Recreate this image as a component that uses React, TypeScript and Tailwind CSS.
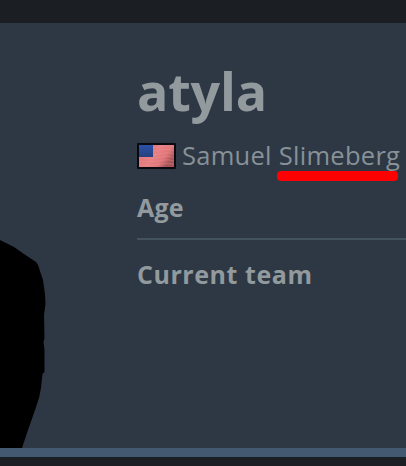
const FONT = "font-['Open_Sans','Noto_Sans',sans-serif]";

function UsFlag() {
  return (
    <svg width="39" height="26" viewBox="0 0 39 26" className="mt-px shrink-0" role="img" aria-label="United States">
      <defs>
        <linearGradient id="sheen" x1="0" y1="0" x2="1" y2="0.5">
          <stop offset="0" stopColor="#df6b70" />
          <stop offset="0.55" stopColor="#e88083" />
          <stop offset="0.8" stopColor="#df7679" />
          <stop offset="1" stopColor="#a95459" />
        </linearGradient>
        <linearGradient id="canton" x1="0" y1="0" x2="0" y2="1">
          <stop offset="0" stopColor="#2a52a8" />
          <stop offset="1" stopColor="#263f7e" />
        </linearGradient>
      </defs>
      <rect width="39" height="26" rx="1" fill="#080a10" />
      <rect x="2" y="2" width="35" height="22" fill="url(#sheen)" />
      {[4, 7.5, 11, 14.5, 18, 21.5].map((y) => (
        <path
          key={y}
          d={`M2 ${y} C10 ${y + 1.5} 18 ${y + 1} 25 ${y - 0.5} S33 ${y - 1} 37 ${y}`}
          fill="none"
          stroke="#f0a0a1"
          strokeWidth="1.2"
          opacity="0.25"
        />
      ))}
      <rect x="2" y="2" width="14" height="12" fill="url(#canton)" />
    </svg>
  );
}

function PlayerSilhouette() {
  return (
    <svg width="48" height="208" viewBox="0 0 48 208" className="block self-end">
      <path
        d="M0 0 L14 7 L24 14 L36 22 L38 25 L43 40 L45 54 L45.5 64 L44 75 L44.5 98 L43.5 102 L44.5 110 L44.5 132 L42.5 134 L41 148 L39 158 L34 173 L28 190 L22 208 L0 208 Z"
        fill="#000"
      />
    </svg>
  );
}

export default function App() {
  return (
    <div className={`flex h-[466px] w-[406px] flex-col overflow-hidden bg-[#1b1f23] text-[#929a9e] ${FONT}`}>
      <main className="mt-[23px] flex h-[425px] shrink-0 bg-[#2d3844]">
        <div className="flex w-[137px] shrink-0">
          <PlayerSilhouette />
        </div>
        <section className="min-w-0 flex-1 whitespace-nowrap">
          <h1 className="mt-[33px] h-[84px] text-[52px] leading-[69px] font-bold tracking-[-0.2px]">atyla</h1>
          <div className="flex h-[30px] items-center gap-[6px] text-[25.5px] leading-[30px] tracking-[0.28px] text-[#879197]">
            <UsFlag />
            <span className="relative">
              Samuel <span>Slimeberg</span>
              <span className="absolute top-[31px] left-[95px] h-[10px] w-[121px] rounded-[4px] bg-[#fe0000]" />
            </span>
          </div>
          <div className="mt-[20px] h-[50px] border-b-2 border-[#43525f] text-[25px] leading-[34px] font-bold tracking-[0.2px]">Age</div>
          <div className="mt-[17px] text-[25px] leading-[34px] font-bold tracking-[0.55px]">Current team</div>
        </section>
      </main>
      <div className="h-[9px] shrink-0 bg-[#435971]" />
    </div>
  );
}
